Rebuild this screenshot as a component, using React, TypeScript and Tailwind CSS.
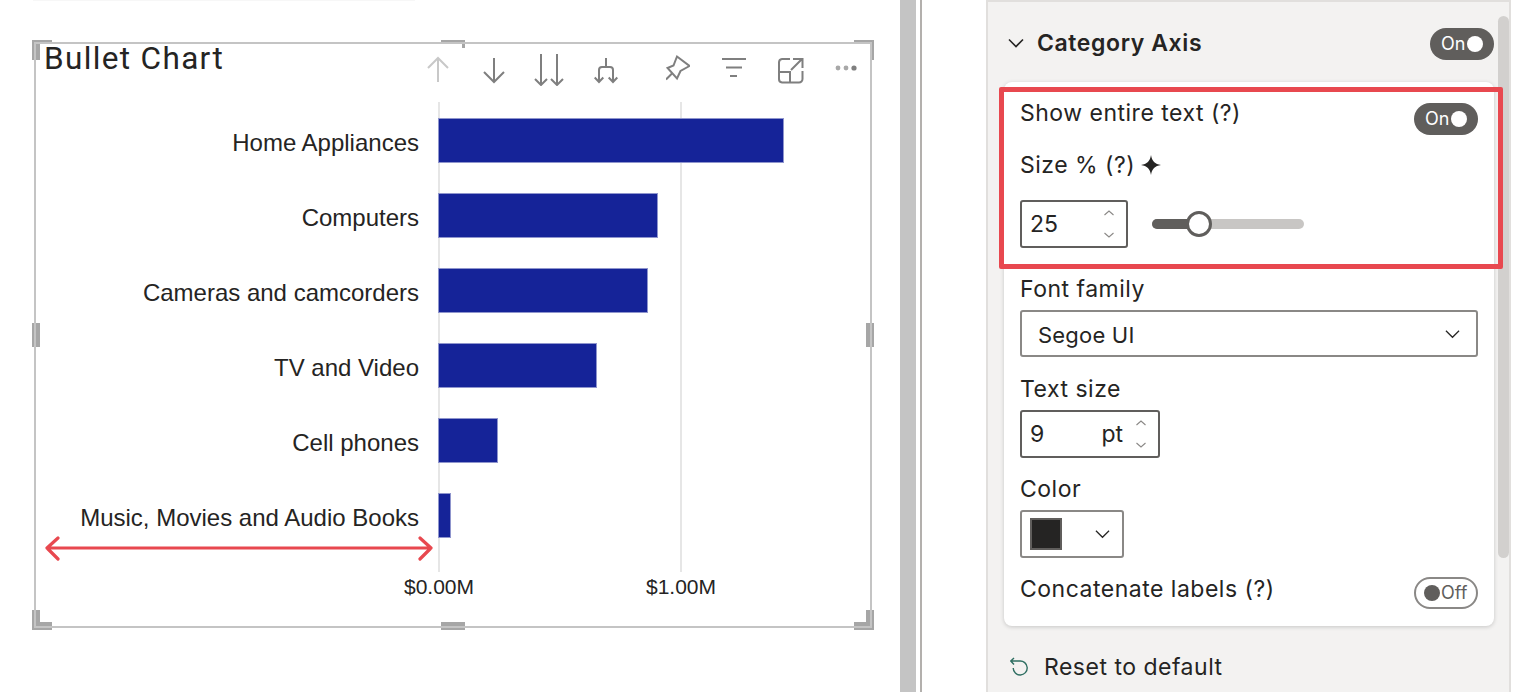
import React from "react";

const chartRows = [
  { label: "Home Appliances", w: 346 },
  { label: "Computers", w: 220 },
  { label: "Cameras and camcorders", w: 210 },
  { label: "TV and Video", w: 159 },
  { label: "Cell phones", w: 60 },
  { label: "Music, Movies and Audio Books", w: 13 },
];

function Icon({ w, c = "#7f7f7f", className = "", children }: { w: number; c?: string; className?: string; children: React.ReactNode }) {
  return (
    <svg width={w} height={32} viewBox={`0 0 ${w} 32`} fill="none" stroke={c} strokeWidth={2} className={className}>
      {children}
    </svg>
  );
}

function Toolbar() {
  return (
    <div className="absolute left-[392px] top-[12px] flex">
      <Icon w={24} c="#c8c8c8"><path d="M12 28V4M2 14L12 4L22 14" /></Icon>
      <Icon w={24} className="ml-[32px]"><path d="M12 4V28M2 18L12 28L22 18" /></Icon>
      <Icon w={32} className="ml-[27px]"><path d="M8 0V31M2 25L8 31L14 25M24 0V31M18 25L24 31L30 25" /></Icon>
      <Icon w={24} className="ml-[29px]"><path d="M12 4V13M5 28V16A3 3 0 0 1 8 13H16A3 3 0 0 1 19 16V28M0.7 23.5L5 28L9.3 23.5M14.7 23.5L19 28L23.3 23.5" /></Icon>
      <Icon w={24} className="ml-[48px]"><path d="M11 2.5L23.5 12L14.5 17L11 24.5L1.5 14L7.5 11.5ZM0 25.5L6 19.5" /></Icon>
      <Icon w={24} className="ml-[32px]"><path d="M0 5H24M4 13.5H20M8 22H15" /></Icon>
      <Icon w={26} className="ml-[32px]"><path d="M12 5H4A3.5 3.5 0 0 0 1 8.5V25A3.5 3.5 0 0 0 4 28.5H21A3.5 3.5 0 0 0 24.5 25V17M0 18H12V29M12 18V17.5M13 16L24 5M15 5H24.5V14" /></Icon>
      <svg width={22} height={32} viewBox="0 0 22 32" className="ml-[31px]">
        <circle cx="3" cy="14" r="2.4" fill="#a8a8a8" />
        <circle cx="11" cy="14" r="2.4" fill="#a8a8a8" />
        <circle cx="19" cy="14" r="2.6" fill="#7f7f7f" />
      </svg>
    </div>
  );
}

function Handles() {
  return (
    <>
      <div className="absolute left-[-2px] top-[-2px] w-[8px] h-[20px] bg-[#a6a6a6]" />
      <div className="absolute left-[-2px] top-[-2px] w-[20px] h-[3px] bg-[#a6a6a6]" />
      <div className="absolute right-[-2px] top-[-2px] w-[20px] h-[3px] bg-[#a6a6a6]" />
      <div className="absolute right-[-2px] top-[-2px] w-[3px] h-[20px] bg-[#a6a6a6]" />
      <div className="absolute left-[-2px] bottom-[-2px] w-[8px] h-[20px] bg-[#a6a6a6]" />
      <div className="absolute left-[-2px] bottom-[-2px] w-[20px] h-[8px] bg-[#a6a6a6]" />
      <div className="absolute right-[-2px] bottom-[-2px] w-[8px] h-[20px] bg-[#a6a6a6]" />
      <div className="absolute right-[-2px] bottom-[-2px] w-[20px] h-[8px] bg-[#a6a6a6]" />
      <div className="absolute left-[-2px] top-[281px] w-[8px] h-[24px] bg-[#a6a6a6]" />
      <div className="absolute right-[-2px] top-[281px] w-[8px] h-[24px] bg-[#a6a6a6]" />
      <div className="absolute left-[407px] top-[-2px] w-[24px] h-[3px] bg-[#a6a6a6]" />
      <div className="absolute left-[428px] top-[-2px] w-[3px] h-[8px] bg-[#a6a6a6]" />
      <div className="absolute left-[407px] bottom-[-2px] w-[24px] h-[8px] bg-[#a6a6a6]" />
    </>
  );
}

function Visual() {
  return (
    <div className="relative ml-[34px] mt-[41px] w-[838px] h-[586px]">
      <Handles />
      <div className="absolute left-[404px] top-[60px] h-[470px] w-[2px] bg-[#e6e6e6]" />
      <div className="absolute left-[646px] top-[60px] h-[470px] w-[2px] bg-[#e6e6e6]" />
      <div className="relative h-[77px] pl-[10px] pt-[1px]">
        <div className="text-[31.5px] leading-[32px] tracking-[1.35px] text-[#252423] font-['Roboto',sans-serif]">Bullet Chart</div>
      </div>
      <Toolbar />
      <div className="relative flex flex-col gap-[32px]">
        {chartRows.map((r) => (
          <div key={r.label} className="flex h-[43px]">
            <div className="w-[385px] pt-[5px] text-right text-[24px] leading-[37px] text-[#252423] whitespace-nowrap font-['Liberation_Sans',sans-serif]">
              {r.label}
            </div>
            <div className="ml-[19px] -mt-[1px] h-[45px] bg-[#152398] border border-[#8f95cd]" style={{ width: r.w }} />
          </div>
        ))}
      </div>
      <div className="relative mt-[36px] flex text-[21px] leading-[28px] text-[#252423] font-['Liberation_Sans',sans-serif]">
        <div className="ml-[355px] w-[100px] text-center">$0.00M</div>
        <div className="ml-[142px] w-[100px] text-center">$1.00M</div>
      </div>
      <svg className="absolute left-[8px] top-[489px]" width={394} height={34} viewBox="0 0 394 34" fill="none" stroke="#e8484f" strokeWidth={3.2} strokeLinecap="round" strokeLinejoin="round">
        <path d="M5 17H389M16 7L5 17L16 28M378 7L389 17L378 28" />
      </svg>
      <div className="absolute inset-0 border-2 border-[#c4c4c4] pointer-events-none" />
    </div>
  );
}

function Toggle({ on = true }: { on?: boolean }) {
  if (!on)
    return (
      <div className="w-[64px] h-[32px] rounded-full border-2 border-[#8a8886] bg-white flex items-center pl-[8px] gap-[1px]">
        <div className="w-[16px] h-[16px] rounded-full bg-[#605e5c]" />
        <span className="text-[18px] leading-none text-[#605e5c]">Off</span>
      </div>
    );
  return (
    <div className="w-[64px] h-[32px] rounded-full bg-[#605e5c] flex items-center pl-[11px] gap-[2px]">
      <span className="text-[18px] leading-none text-white">On</span>
      <div className="w-[16px] h-[16px] rounded-full bg-white" />
    </div>
  );
}

function Spin() {
  return (
    <svg width={12} height={36} viewBox="0 0 12 36" fill="none" stroke="#8a8886" strokeWidth={1.1}>
      <path d="M1.5 9L6 5L10.5 9M1.5 27L6 31L10.5 27" />
    </svg>
  );
}

function Chevron({ c = "#252423", w = 16, sw = 1.6 }: { c?: string; w?: number; sw?: number }) {
  return (
    <svg width={w} height={10} viewBox="0 0 16 10" fill="none" stroke={c} strokeWidth={sw}>
      <path d="M1 1.5L8 8.5L15 1.5" />
    </svg>
  );
}

const body = "text-[23px] leading-[30px] tracking-[0.5px]";

function Panel() {
  return (
    <div className="relative ml-[64px] w-[525px] h-[692px] bg-[#f3f2f1] border-t-2 border-l-2 border-r-2 border-[#e1dfdd] font-['Inter',sans-serif] text-[#252423]">
      <div className="absolute right-0 top-[14px] w-[11px] h-[542px] rounded-full bg-[#d2d0ce]" />
      <div className="pl-[16px] pr-[15px]">
        <div className="h-[80px] pt-[26px]">
          <div className="flex items-start justify-between">
            <div className="flex items-center h-[30px] ml-[4px]">
              <Chevron />
              <span className="ml-[13px] text-[23px] font-semibold leading-[30px] tracking-[0.6px]">Category Axis</span>
            </div>
            <Toggle />
          </div>
        </div>
        <div className="relative w-[490px] h-[544px] bg-white rounded-[8px] shadow-[0_1px_4px_rgba(0,0,0,0.18)] px-[16px]">
          <div className="absolute left-[-5px] top-[5px] w-[504px] h-[182px] border-[5px] border-[#e8484f] rounded-[2px]" />
          <div className="pt-[16px] flex justify-between items-start h-[64px]">
            <span className={body}>Show entire text (?)</span>
            <div className="mt-[5px]"><Toggle /></div>
          </div>
          <div className={`flex items-center h-[30px] mt-[4px] ${body}`}>
            Size % (?)
            <svg width={20} height={20} viewBox="0 0 20 20" className="ml-[6px]" fill="#252423"><path d="M10 0C10.8 6 14 9.2 20 10C14 10.8 10.8 14 10 20C9.2 14 6 10.8 0 10C6 9.2 9.2 6 10 0Z" /></svg>
          </div>
          <div className="flex items-center mt-[20px] h-[48px]">
            <div className="w-[108px] h-[48px] border-2 border-[#605e5c] rounded-[3px] flex items-center justify-between pl-[8px] pr-[11px]">
              <span className="text-[23px]">25</span>
              <Spin />
            </div>
            <div className="relative ml-[24px] w-[152px] h-[10px] rounded-full bg-[#c8c6c4]">
              <div className="w-[47px] h-[10px] rounded-l-full bg-[#605e5c]" />
              <div className="absolute left-[34px] top-[-8px] w-[26px] h-[26px] rounded-full border-[3px] border-[#605e5c] bg-white" />
            </div>
          </div>
          <div className={`mt-[26px] ${body}`}>Font family</div>
          <div className="mt-[6px] h-[47px] border-2 border-[#8a8886] rounded-[3px] flex items-center justify-between pl-[16px] pr-[16px]">
            <span className="text-[22px] tracking-[0.2px] mt-[4px]">Segoe UI</span>
            <Chevron w={15} sw={1.3} />
          </div>
          <div className={`mt-[17px] ${body}`}>Text size</div>
          <div className="mt-[6px] w-[140px] h-[48px] border-2 border-[#605e5c] rounded-[3px] flex items-center pl-[8px] pr-[11px]">
            <span className="text-[23px]">9</span>
            <span className="text-[23px] ml-auto mr-[12px]">pt</span>
            <Spin />
          </div>
          <div className={`mt-[16px] ${body}`}>Color</div>
          <div className="mt-[6px] w-[104px] h-[48px] border-2 border-[#8a8886] rounded-[3px] flex items-center justify-between pl-[8px] pr-[12px]">
            <div className="w-[32px] h-[32px] bg-[#252423] border-2 border-[#605e5c]" />
            <Chevron w={15} sw={1.3} />
          </div>
          <div className="mt-[16px] flex justify-between items-start">
            <span className={body}>Concatenate labels (?)</span>
            <div className="mt-[3px]"><Toggle on={false} /></div>
          </div>
        </div>
        <div className={`mt-[26px] flex items-center ${body}`}>
          <svg width={20} height={20} viewBox="0 0 20 20" fill="none" stroke="#2f6f62" strokeWidth={1.4} className="ml-[6px]">
            <path d="M4 1L0.8 4L4 7.5M0.8 4H9.5A7 7 0 1 1 3.2 11" />
          </svg>
          <span className="ml-[14px]">Reset to default</span>
        </div>
      </div>
    </div>
  );
}

export default function App() {
  return (
    <div className="w-[1514px] h-[692px] flex bg-white overflow-hidden">
      <div className="w-[900px] shrink-0">
        <div className="ml-[33px] w-[382px] h-px bg-[#f7f7f7]" />
        <Visual />
      </div>
      <div className="w-[16px] shrink-0 bg-[#c4c4c4]" />
      <div className="ml-[4px] w-[2px] shrink-0 bg-[#b3b0ad]" />
      <Panel />
    </div>
  );
}
